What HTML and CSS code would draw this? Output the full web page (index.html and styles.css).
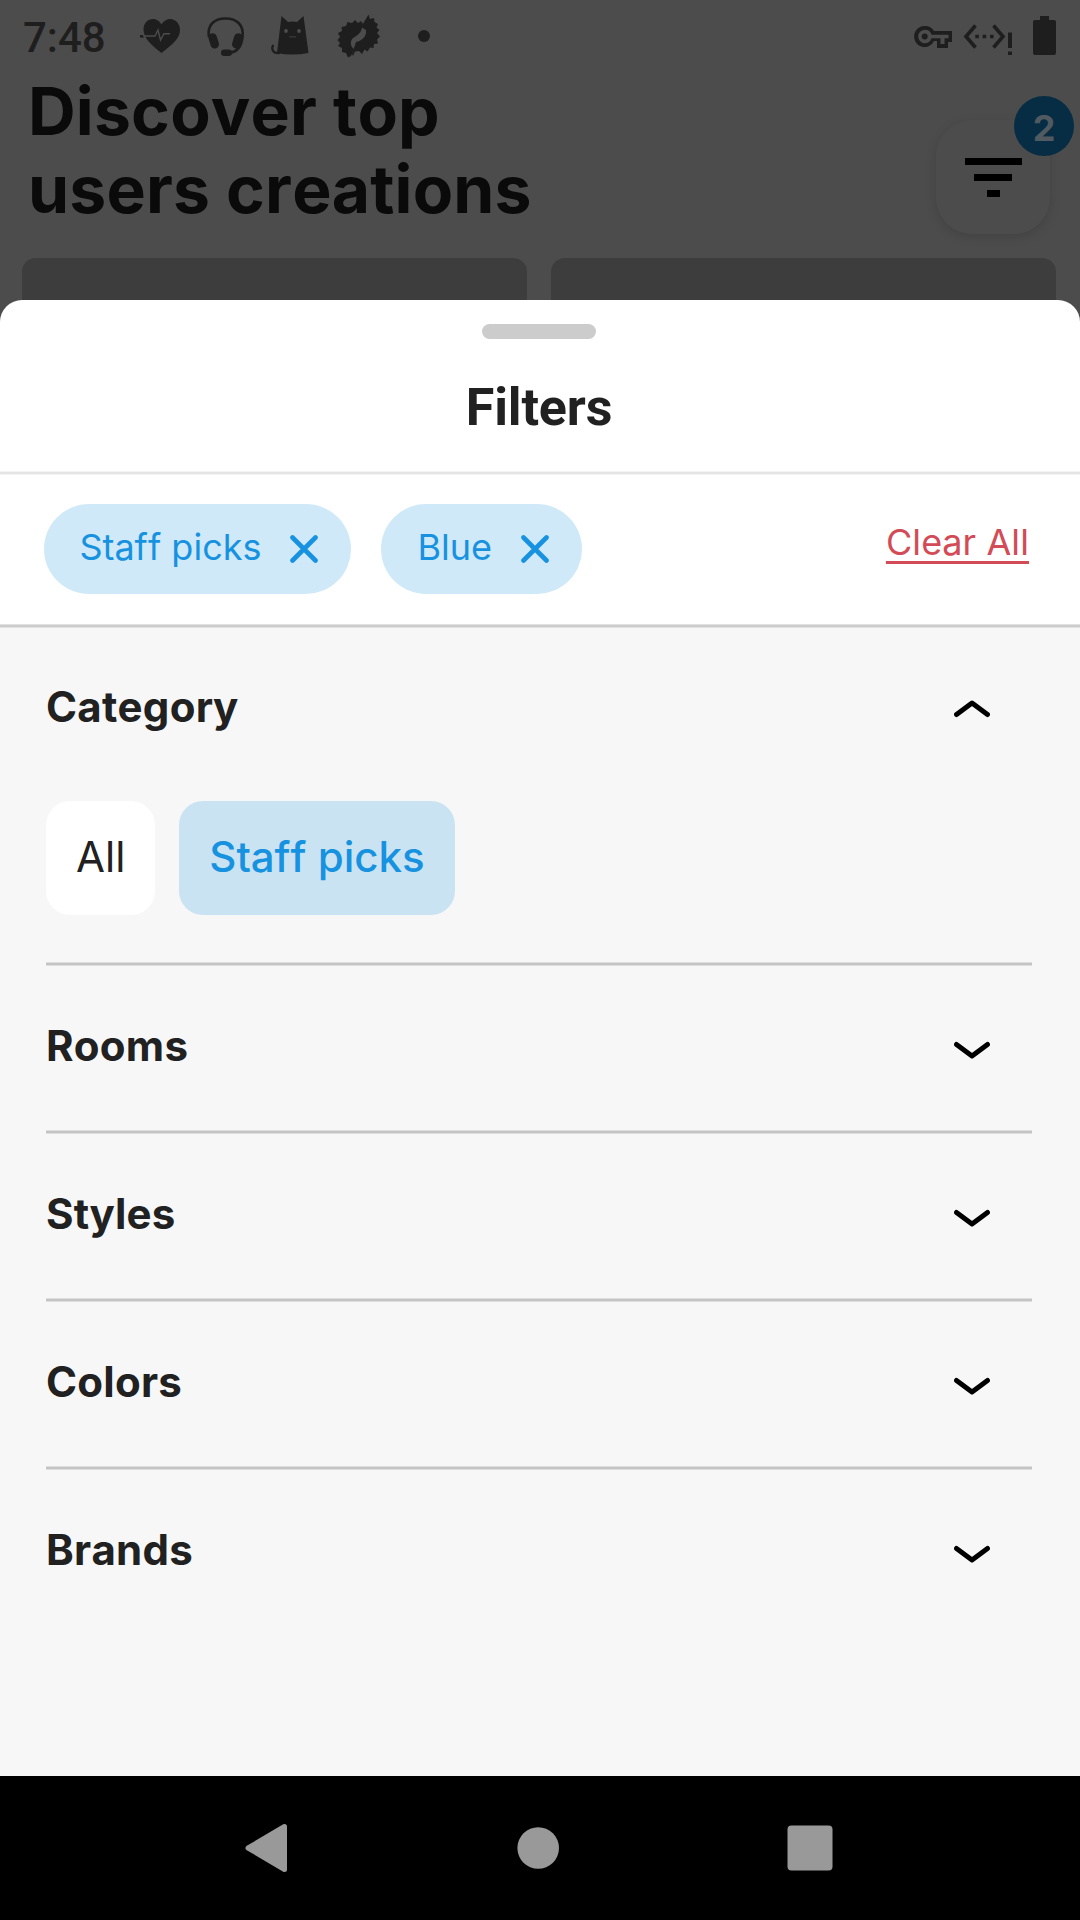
FILE: index.html
```html
<!DOCTYPE html>
<html lang="en">
<head>
<meta charset="utf-8">
<title>Filters</title>
<link rel="stylesheet" href="styles.css">
</head>
<body>
<div class="screen">
  <header class="backdrop">
    <div class="status">
      <span class="clock">7:48</span>
      <svg class="status-left" width="294" height="80" viewBox="130 0 294 80" fill="#1e1e1e">
        <path d="M161.500 53C150 44 143.500 38 143.500 29C143.500 23 148 19 153 19C157 19 160 21.500 161.500 24.500C163 21.500 166.500 19 170 19C176 19 180 24 180 30C180 38 173 44 161.500 53Z"/>
        <path d="M140 36.300H144" stroke="#1e1e1e" stroke-width="2.500"/>
        <path d="M143 36H155L158 30L160.500 40L164 33.700H170" fill="none" stroke="#4c4c4c" stroke-width="1.400"/>
        <path d="M209 37C207 25 214 18.500 225.500 18.500S244 25 242.500 37C241.500 47 237 52 229 53" fill="none" stroke="#1e1e1e" stroke-width="2.600"/>
        <rect x="209.500" y="33" width="8.500" height="15.500" rx="4.200" transform="rotate(-17 214 41)"/>
        <rect x="233" y="33" width="8.500" height="15.500" rx="4.200" transform="rotate(17 237 41)"/>
        <rect x="221" y="49.500" width="11" height="6.500" rx="3.200"/>
        <path d="M277 53L281.500 16L288 22Q292.500 21 297 22L303.500 16L308.500 53Q292 56 277 53Z"/>
        <path d="M280 53C272 54 271 48 273.500 45" fill="none" stroke="#1e1e1e" stroke-width="2.200"/>
        <circle cx="286" cy="31" r="1.900" fill="#4c4c4c"/><circle cx="299" cy="31" r="1.900" fill="#4c4c4c"/>
        <path d="M289 36.800H296" stroke="#3a3a3a" stroke-width="1.200"/>
        <path d="M363 24L361 21L358 23L355 20L352 23L347.500 22L346 26L341.500 27L342 31L338 33L340 37L337.500 40L340 43L338 46L342 48L342 52L346 53L348 57.500L351 56L354 49C350 46 350 41 353 38C358 35 360 33 361 31Z"/>
        <path d="M361 27L368.500 14.500L370 19L374 18L374.500 22L378 24L376.500 27.500L379.500 30L377 33L380 36.500L377 39.500L378 43.500L374 44L373.500 48L370 47.500L367.500 51.500L364.500 49.500L362 54L359 51L355 51.500L353 56L352 54L356 42C362 41 367 36 366 30Z"/>
      </svg>
      <i class="dot"></i>
      <svg class="status-right" width="150" height="80" viewBox="910 0 150 80" fill="#1e1e1e">
        <path fill-rule="evenodd" d="M925 26A10.500 10.500 0 1 0 934 41H937V48H948V42H952V31H934A10.500 10.500 0 0 0 925 26ZM925 29.700A6.800 6.800 0 0 1 931.500 34.700H948.500V38.300H944.500V44H940.500V38.300H931.500A6.800 6.800 0 1 1 925 29.700Z"/>
        <circle cx="924.700" cy="36.500" r="3"/>
        <path d="M975.500 25.500L966 36.500L975.500 47.500M993.500 25.500L1003 36.500L993.500 47.500" fill="none" stroke="#1e1e1e" stroke-width="3.600"/>
        <path d="M975.300 34.700h3.600v3.600h-3.600zM982.600 34.700h3.600v3.600h-3.600zM990 34.700h3.600v3.600h-3.600zM1008 32.500h4v15.500h-4zM1008 51.500h4v3.500h-4z"/>
        <path d="M1040 16h9v4h5q2 0 2 2v31q0 2-2 2h-19q-2 0-2-2V22q0-2 2-2h5z"/>
      </svg>
    </div>
    <div class="hero">
      <h1>Discover top<br>users creations</h1>
      <div class="filter-button">
        <i class="bar bar-long"></i><i class="bar bar-mid"></i><i class="bar bar-short"></i>
        <span class="badge">2</span>
      </div>
    </div>
    <div class="cards"><div class="card"></div><div class="card"></div></div>
  </header>

  <main class="sheet">
    <div class="sheet-head">
      <div class="handle"></div>
      <h2>Filters</h2>
    </div>
    <div class="rule rule-light"></div>
    <div class="active">
      <span class="chip">Staff picks<svg width="28" height="28" viewBox="0 0 28 28"><path d="M2.500 2.500L25.500 25.500M25.500 2.500L2.500 25.500"/></svg></span>
      <span class="chip">Blue<svg width="28" height="28" viewBox="0 0 28 28"><path d="M2.500 2.500L25.500 25.500M25.500 2.500L2.500 25.500"/></svg></span>
      <a class="clear">Clear All</a>
    </div>
    <div class="rule"></div>
    <div class="sections">
      <section class="row row-open"><h3>Category</h3><svg class="chev up" width="36" height="20" viewBox="0 0 36 20"><path d="M2.500 3.500L18 15L33.500 3.500"/></svg></section>
      <div class="options"><span class="option">All</span><span class="option selected">Staff picks</span></div>
      <div class="rule rule-dark"></div>
      <section class="row"><h3>Rooms</h3><svg class="chev" width="36" height="20" viewBox="0 0 36 20"><path d="M2.500 3.500L18 15L33.500 3.500"/></svg></section>
      <div class="rule rule-dark"></div>
      <section class="row"><h3>Styles</h3><svg class="chev" width="36" height="20" viewBox="0 0 36 20"><path d="M2.500 3.500L18 15L33.500 3.500"/></svg></section>
      <div class="rule rule-dark"></div>
      <section class="row"><h3>Colors</h3><svg class="chev" width="36" height="20" viewBox="0 0 36 20"><path d="M2.500 3.500L18 15L33.500 3.500"/></svg></section>
      <div class="rule rule-dark"></div>
      <section class="row"><h3>Brands</h3><svg class="chev" width="36" height="20" viewBox="0 0 36 20"><path d="M2.500 3.500L18 15L33.500 3.500"/></svg></section>
    </div>
  </main>

  <nav class="navbar">
    <svg width="44" height="50" viewBox="0 0 44 50"><path d="M3 25L39.500 3.500V46.500Z" stroke="#999" stroke-width="5" stroke-linejoin="round"/></svg>
    <svg width="42" height="42" viewBox="0 0 42 42"><circle cx="21.200" cy="21" r="20.800"/></svg>
    <svg width="46" height="46" viewBox="0 0 46 46"><rect x="0.500" y="0.500" width="45" height="45" rx="4"/></svg>
  </nav>
</div>
</body>
</html>
```
FILE: styles.css
```css
* { box-sizing: border-box; }
body { margin: 0; font-family: Inter, "Liberation Sans", sans-serif; color: #212121; font-kerning: none; }
h1, h2, h3 { margin: 0; }
svg { display: block; flex: none; }
.screen { width: 1080px; height: 1920px; display: flex; flex-direction: column; overflow: hidden; background: #4c4c4c; }

/* dimmed page under the sheet */
.backdrop { height: 300px; flex: none; display: flex; flex-direction: column; }
.status { height: 80px; flex: none; display: flex; align-items: center; padding: 0 20px 0 23px; color: #1e1e1e; }
.clock { width: 107px; font-family: Roboto, sans-serif; font-weight: 500; font-size: 42px; line-height: 76px; height: 80px; }
.status-left { margin-right: -6px; }
.dot { width: 12px; height: 12px; margin-top: -8px; border-radius: 50%; background: #1e1e1e; }
.status-right { margin-left: auto; }
.hero { height: 178px; flex: none; display: flex; justify-content: space-between; padding: 0 30px 0 28px; color: #0a0a0a; }
h1 { font-size: 66px; line-height: 78px; font-weight: 700; margin-top: -8px; letter-spacing: .2px; }
.filter-button { position: relative; width: 114px; height: 114px; margin-top: 40px; padding-top: 38px; display: flex; flex-direction: column; align-items: center; gap: 9px; border-radius: 36px; background: #4c4c4c; box-shadow: 0 3px 11px rgba(0,0,0,.13); }
.bar { height: 7px; background: #000; }
.bar-long { width: 57px; }
.bar-mid { width: 38px; }
.bar-short { width: 13px; }
.badge { position: absolute; top: -24px; right: -24px; width: 60px; height: 60px; border-radius: 50%; background: #072d44; color: #515a60; font-weight: 700; font-size: 36px; line-height: 64px; text-align: center; }
.cards { flex: 1; display: grid; grid-template-columns: 1fr 1fr; gap: 24px; padding: 0 24px 0 22px; }
.card { height: 80px; border-radius: 14px; background: #3d3d3d; }

/* bottom sheet */
.sheet { position: relative; flex: 1; display: flex; flex-direction: column; border-radius: 22px 22px 0 0; background: #fff; overflow: hidden; }
.sheet-head { height: 171px; flex: none; padding: 24px 2px 0 0; display: flex; flex-direction: column; align-items: center; }
.handle { width: 114px; height: 15px; border-radius: 8px; background: #ccc; }
h2 { font: 700 52px/60px Roboto, sans-serif; font-kerning: auto; margin-top: 39px; letter-spacing: -.15px; }
.rule { height: 4px; flex: none; background: #ccc; border: solid #e2e2e2; border-width: 1px 0; }
.rule-light { background: #e4e4e4; border-color: #f3f3f3; }
.rule-dark { background: #c4c4c4; border-color: #dedede; }
.active { height: 149px; flex: none; display: flex; align-items: center; gap: 30px; padding: 0 51px 1px 43.5px; font-size: 36px; }
.chip { height: 90px; display: flex; align-items: center; gap: 28.5px; padding: 0 33.5px 4px 36px; border-radius: 45px; background: #d0e9f8; color: #1792e0; }
.chip svg { margin-top: 4px; }
.chip path { fill: none; stroke: #1792e0; stroke-width: 4.600; stroke-linecap: round; }
.clear { margin-left: auto; padding-bottom: 14px; color: #d34b56; letter-spacing: .1px; text-decoration: underline; text-decoration-thickness: 3px; text-underline-offset: 6px; }
.sections { flex: 1; padding: 0 48px 0 46px; background: #f7f7f7; }
.row { height: 164px; display: flex; align-items: center; justify-content: space-between; padding: 0 42px 4px 0; }
h3 { font-size: 42px; line-height: 50px; font-weight: 700; letter-spacing: .25px; }
.chev { margin-top: 9px; }
.chev path { fill: none; stroke: #000; stroke-width: 5; stroke-linecap: round; stroke-linejoin: round; }
.row-open { padding-bottom: 7px; }
.up { margin-top: 3px; transform: scaleY(-1); }
.options { display: flex; gap: 24px; height: 170px; padding-top: 9px; }
.option { height: 114px; padding: 0 30px; border-radius: 24px; background: #fff; font-size: 42px; line-height: 112px; }
.selected { background: #cae3f2; color: #1792e0; font-weight: 500; }

.navbar { height: 144px; flex: none; display: flex; align-items: center; justify-content: space-between; padding: 0 247px 0 245px; background: #000; }
.navbar svg { fill: #999; }
```
